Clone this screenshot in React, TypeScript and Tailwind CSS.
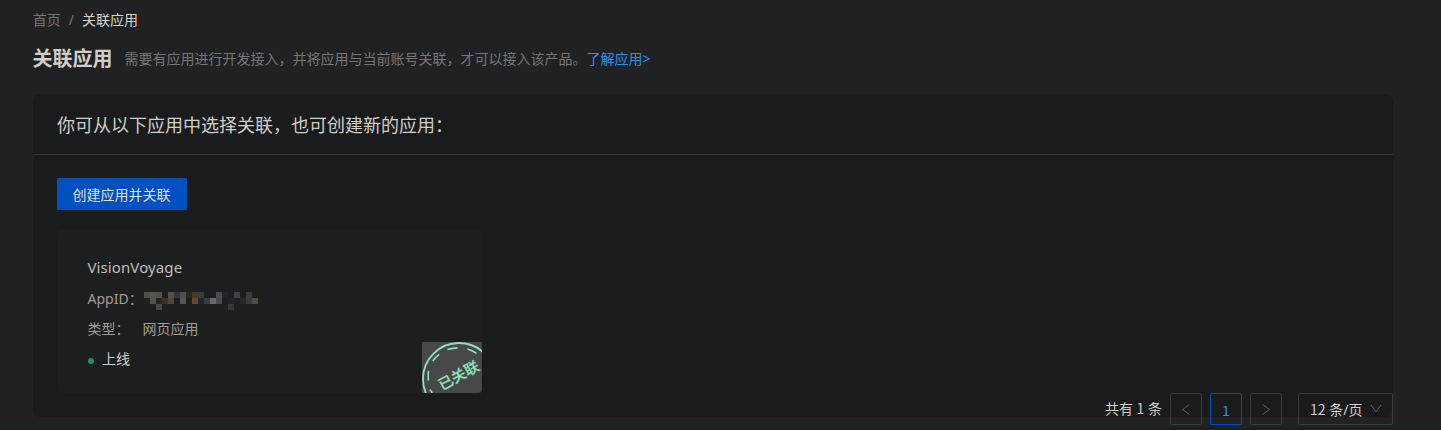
import React from "react";

const MASK_CELLS: string[] = [
  "#524f4b", "#56544f", "#53514d", "", "#53514f", "#30383c", "#555047", "#2b2423", "#4b3827", "#363d40", "", "", "#514c48", "#212330", "", "#3f4243", "", "#363d3f", "",
  "#231f1e", "#505254", "#2b2322", "#3c3029", "#574633", "", "#535556", "", "#5c4a34", "#23282a", "#353d3f", "#696a67", "#484a4b", "", "#272123", "", "#2b282b", "#363d3f", "#544b3e",
  "", "", "#4b4643", "", "", "", "", "", "", "", "", "", "", "", "#3e3531", "", "", "", "",
];

function MaskedId() {
  return (
    <span className="mt-1 grid grid-cols-[repeat(19,6px)] auto-rows-[6px]">
      {MASK_CELLS.map((c, i) => (
        <span key={i} style={{ backgroundColor: c || "transparent" }} />
      ))}
    </span>
  );
}

function Stamp() {
  return (
    <svg className="absolute right-0 bottom-0 rounded-br-[4px]" width="60" height="51" viewBox="0 0 60 51">
      <rect width="60" height="51" fill="#484848" />
      <g fill="none" stroke="#91e3bb">
        <circle cx="37" cy="37" r="36" strokeWidth="1.8" />
        <path d="M6.4 38.5 Q5.9 33 6.6 29 M10.7 19 Q13.7 15 17.2 12.4 M25.4 7.6 Q30 6 35.6 5.9 M45.5 7 Q50 8.4 54.5 11.4 M8 47.5 L10.3 51" strokeWidth="1.6" />
      </g>
      <text x="20" y="48.8" transform="rotate(-29 20 48.8)" fill="#91e3bb" stroke="#91e3bb" strokeWidth="0.15" fontSize="14.7" fontWeight="500">
        已关联
      </text>
    </svg>
  );
}

function Chevron({ d }: { d: string }) {
  return (
    <svg width="12" height="12" viewBox="0 0 12 12" fill="none" stroke="#5b5c5d" strokeWidth="1">
      <path d={d} />
    </svg>
  );
}

const box = "flex h-8 w-8 items-center justify-center rounded-[2px] border";
const digits = "font-['Noto_Sans_CJK_SC',sans-serif] leading-none";

export default function App() {
  return (
    <div className="flex h-[430px] flex-col overflow-hidden border-b-2 border-[#211c1d] bg-[#202122] pr-12 pl-[33px] font-['Noto_Sans','Noto_Sans_CJK_SC',sans-serif] text-sm text-[#d0cec9]">
      <nav className="mt-[9px] -ml-[0.3px] flex h-[22px] shrink-0 items-center gap-2 text-[#777675]">
        <span>首页</span>
        <span>/</span>
        <span className="text-[#d5d2cd]">关联应用</span>
      </nav>
      <header className="mt-3 -ml-[0.4px] flex h-8 shrink-0 items-center">
        <h1 className="text-[20px] leading-8 font-bold">关联应用</h1>
        <p className="ml-3 text-[#777675]">
          需要有应用进行开发接入，并将应用与当前账号关联，才可以接入该产品。
          <a className="text-[#2b91ef]">了解应用&gt;</a>
        </p>
      </header>

      <section className="mt-[19px] flex h-[323px] shrink-0 flex-col rounded-lg bg-[#1a1b1c]">
        <h2 className="flex h-[61px] shrink-0 items-center border-b border-[#38393a] px-6 pt-1 text-[18px]">
          你可从以下应用中选择关联，也可创建新的应用：
        </h2>
        <div className="flex h-[238px] shrink-0 flex-col items-start px-6 pt-[23px]">
          <button className="h-8 w-[130px] shrink-0 rounded-[1px] border border-[#0750b4] bg-[#0050c1] pt-0.5 pr-px text-[#e1dfdb]">创建应用并关联</button>
          <article className="relative mt-5 flex h-[163px] w-[425px] shrink-0 flex-col rounded-[4px] bg-[#1d1e1f] pt-[25px] pl-[30.5px]">
            <h3 className="h-6 text-[15px] leading-6 tracking-[0.1px] text-[#c1beb8]">VisionVoyage</h3>
            <div className="mt-[9px] flex h-[22px] items-center text-[#a19c94]">
              <span className="w-[56.5px] shrink-0">AppID：</span>
              <MaskedId />
            </div>
            <div className="mt-2 flex h-[22px] items-center text-[#a19c94]">
              <span className="w-[55px] shrink-0">类型：</span>
              <span>网页应用</span>
            </div>
            <div className="mt-2 flex h-[22px] items-center gap-2">
              <span className="mt-[3px] ml-[0.5px] h-1.5 w-1.5 rounded-full bg-[#229452]" />
              <span>上线</span>
            </div>
            <Stamp />
          </article>
        </div>
        <div className="flex h-8 shrink-0 items-center justify-end">
          <span className="mr-2">
            共有 <span className={digits}>1</span> 条
          </span>
          <span className={box + " mr-2 border-[#3c3d3e]"}>
            <Chevron d="M9.5 1.5 L2.5 6.5 L9.5 11.5" />
          </span>
          <span className={box + " mr-2 border-[#004fbd] pt-0.5 text-[#2b91ef]"}>
            <span className={digits}>1</span>
          </span>
          <span className={box + " mr-4 border-[#3c3d3e]"}>
            <Chevron d="M2.5 1.5 L9.5 6.5 L2.5 11.5" />
          </span>
          <span className="flex h-8 w-[95px] items-center justify-between rounded-[2px] border border-[#3c3d3e] pr-[10px] pl-[11px]">
            <span className="pt-0.5">
              <span className={digits}>12</span> 条/页
            </span>
            <Chevron d="M1 2 L6 9 L11 2" />
          </span>
        </div>
      </section>
    </div>
  );
}
